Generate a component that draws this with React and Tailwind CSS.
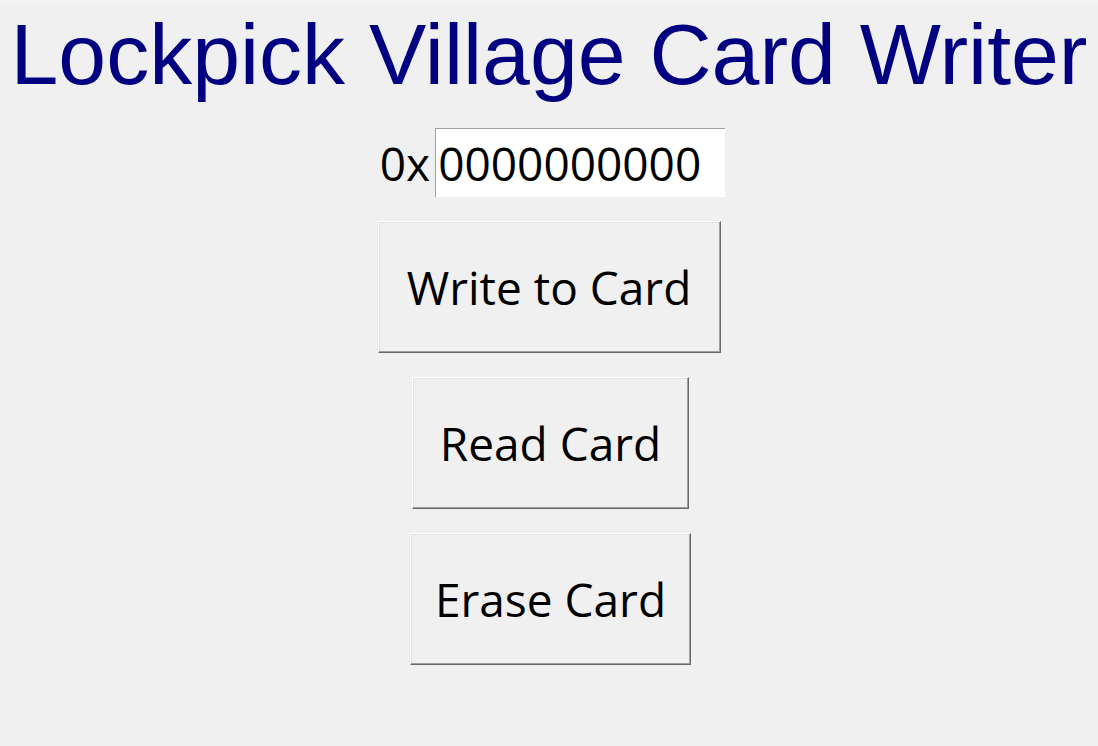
export default function App() {
  const btn =
    "flex items-center justify-center h-[132px] bg-[#f0f0f0] text-black text-[46px] border border-t-white border-l-white border-r-[#696969] border-b-[#696969] shadow-[inset_-1px_-1px_0_#a0a0a0,inset_1px_1px_0_#e3e3e3]"

  return (
    <div className="min-h-[746px] bg-[#f0f0f0] flex flex-col items-center font-['Open_Sans',sans-serif]">
      <div className="h-[3px] w-full bg-[#f4f3f1]" />
      {/* Title */}
      <h1 className="mt-[8px] text-[86px] leading-none text-[#000080] font-['Liberation_Sans',Arial,sans-serif] whitespace-nowrap">
        Lockpick Village Card Writer
      </h1>

      {/* Hex input */}
      <div className="mt-[31px] pl-[7px] flex items-center">
        <span className="text-[46px] leading-none text-black">0x</span>
        <div className="ml-[5px] w-[290px] h-[69px] bg-white border-t border-l border-[#a0a0a0] flex items-center pl-[2px]">
          <span className="text-[46px] leading-none text-black">0000000000</span>
        </div>
      </div>

      {/* Actions */}
      <div className="mt-[24px] flex flex-col items-center gap-[24px]">
        <button className={`${btn} w-[343px]`}>Write to Card</button>
        <button className={`${btn} w-[277px] ml-[3px]`}>Read Card</button>
        <button className={`${btn} w-[281px] ml-[3px]`}>Erase Card</button>
      </div>
    </div>
  )
}
